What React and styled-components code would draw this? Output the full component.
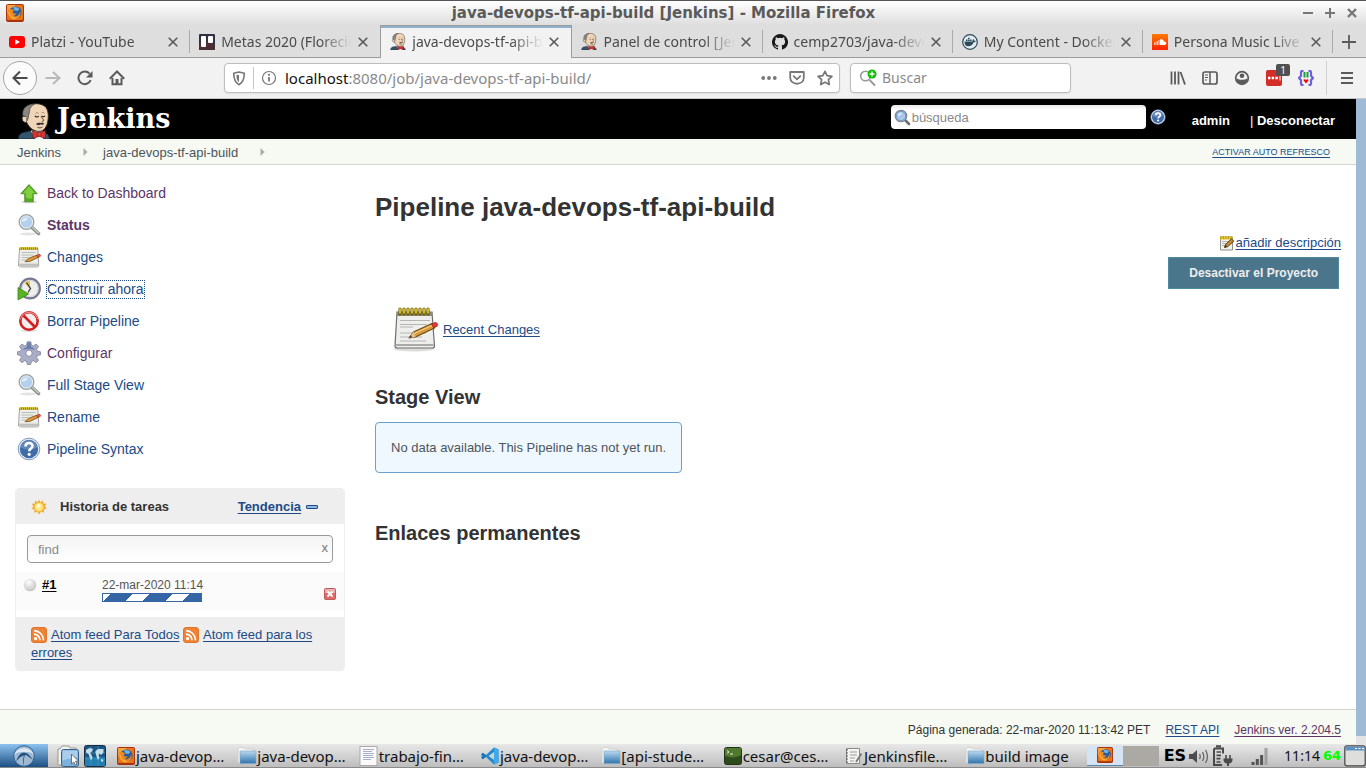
import React from "react";
import styled, { createGlobalStyle, css } from "styled-components";

const uiFont = '"Noto Sans", "Open Sans", sans-serif';
const pageFont = '"Liberation Sans", Helvetica, Arial, sans-serif';
const linkBlue = "#204a87";
const visited = "#5c3566";

const Global = createGlobalStyle`
  *, *::before, *::after { box-sizing: border-box; }
  html, body { margin: 0; padding: 0; }
  body { background: #fff; color: #333; font-family: ${pageFont}; font-size: 13px; line-height: 16px; }
  button, input { font: inherit; color: inherit; margin: 0; }
  button { padding: 0; border: 0; background: none; }
  svg { display: block; flex: none; }
`;

/* ---------- icons ---------- */

const Svg = ({ w = 16, h, vb, children, ...rest }) => (
  <svg width={w} height={h || w} viewBox={vb || `0 0 ${w} ${h || w}`} fill="none" aria-hidden="true" {...rest}>
    {children}
  </svg>
);

const FirefoxIcon = ({ size = 18 }) => (
  <Svg w={size} vb="0 0 18 18">
    <rect width="18" height="18" rx="2" fill="#a8330c" />
    <rect x="1" y="1" width="16" height="15" rx="1" fill="#e8731a" />
    <path d="M1 1h9L1 9z" fill="#f6a443" />
    <circle cx="9.400" cy="8.600" r="6.200" fill="#2a5a9a" />
    <path d="M7 3.500c2-1 5-.4 6.500 1.500l-2 2-3-.5z" fill="#6fb4e0" />
    <path d="M2.600 4.500c1 .6 1.600.4 2.600.6 1.200.2 2.600 1 3 2-1.400 0-1.600.8-1.200 1.600.8 1.200 2.600 1 3.600.3-.6 2-2 2.800-3.600 2.600 2.400 1.800 6.400.6 7.200-4.600 1.400 4.400-1.600 8.600-5.600 8.600-4.200 0-6.800-3.400-6.600-7 .1-1.600.2-3 .6-4.100z" fill="#f08a1f" />
    <path d="M3 8c.4 4 3 6.400 6.200 6.400" stroke="#ffc94d" strokeWidth="1" />
  </Svg>
);

const YoutubeIcon = () => (
  <Svg w={16} h={16}>
    <rect y="2" width="16" height="12" rx="3" fill="#f00" />
    <path d="M6.300 5.200v5.600L11 8z" fill="#fff" />
  </Svg>
);

const TrelloIcon = () => (
  <Svg>
    <rect width="16" height="16" rx="1" fill="#2f3144" />
    <path d="M0 9l8-2 8 4v5H0z" fill="#4b2d33" />
    <rect x="2" y="2" width="5" height="11" rx="1" fill="#fff" />
    <rect x="9" y="2" width="5" height="7" rx="1" fill="#fff" />
  </Svg>
);

const JenkinsHead = ({ w, h }) => (
  <Svg w={w} h={h} vb="0 0 33 38">
    <path d="M0 38c0-3 1-5 4-6.500l8-2 16 2c3 1 4.500 3.500 5 6.500z" fill="#33566c" stroke="#15242e" strokeWidth=".8" />
    <path d="M13 29l5 9h8l1-8z" fill="#e9eef0" />
    <path d="M8.500 20C6 12 7 4 13 1.800 19-.5 26 1 29.500 5c2.500 4 2.500 10 1.500 15-1 5-4 10-9 10-6 0-10.500-3.500-13.500-10z" fill="#f0d6b7" stroke="#2b2420" strokeWidth="1" />
    <path d="M5 14.500C3.500 9 6 4 10.500 2.500 12.500 1.500 15 1 17 1.200c-3 1.500-5.200 4-5.200 7l-.6 3.300c-1 1.500 0 3-1.200 5.500l-1.500 3-1-5z" fill="#8b8884" stroke="#3a3632" strokeWidth=".7" />
    <path d="M8 14.500c-2.500-1.500-4.500 0-4 2.500.4 2.500 2.500 4 4.500 3.500" fill="#f0d6b7" stroke="#2b2420" strokeWidth=".9" />
    <path d="M17.500 13.600c1 1.400 3 1.400 4 .2M24.500 13.600c1 1.300 2.600 1.200 3.500 0" stroke="#2b2420" strokeWidth="1.100" />
    <path d="M18 11c1-1 2.600-1 3.500 0M24.500 10.500c1-.8 2.500-.7 3.200.4" stroke="#8a6f5a" strokeWidth=".7" />
    <path d="M24 14c1 2.500 5 4.800.8 5.500" stroke="#4a362a" strokeWidth="1" />
    <path d="M18.500 22.500c1.500-1.800 3-2 4.800-1.300 1.700-.6 3.300-.3 4.200.8-1.500 1.200-2.800 1-4.200.8-1.500.8-3 .8-4.800-.3z" fill="#3a3230" />
    <path d="M20 25.500c2 1.200 4 1 5.500-.3" stroke="#4a362a" strokeWidth="1" />
    <path d="M15 29.500l7 2.300 6.500-2.800v8.500L22 35l-6.500 2.500z" fill="#d33833" stroke="#7c1512" strokeWidth=".8" />
    <rect x="20" y="31" width="4" height="4" rx="1" fill="#ef3d3a" stroke="#7c1512" strokeWidth=".6" />
  </Svg>
);

const GithubIcon = () => (
  <Svg>
    <path fill="#191717" d="M8 0a8 8 0 0 0-2.530 15.590c.4.070.550-.170.550-.380v-1.490c-2.230.480-2.700-.940-2.700-.940-.360-.920-.890-1.170-.890-1.170-.730-.5.060-.490.060-.490.800.060 1.230.830 1.230.830.710 1.220 1.870.870 2.330.660.070-.520.280-.870.500-1.070-1.770-.2-3.640-.890-3.640-3.950 0-.870.310-1.590.820-2.150-.080-.2-.360-1.010.080-2.120 0 0 .670-.210 2.200.820a7.600 7.600 0 0 1 4 0c1.530-1.030 2.200-.820 2.200-.820.440 1.110.160 1.920.080 2.120.510.560.820 1.280.820 2.150 0 3.070-1.870 3.750-3.650 3.950.290.250.540.730.540 1.480v2.190c0 .210.150.460.550.380A8 8 0 0 0 8 0z" />
  </Svg>
);

const DockerIcon = () => (
  <Svg>
    <circle cx="8" cy="8" r="7.300" fill="#e4eef2" stroke="#2c4a5c" strokeWidth="1.200" />
    <path d="M2.500 7.500h8c.3-1 0-1.800.8-2.500.9.600 1 1.200 1 1.700.6 0 1 .1 1.500.4-.4 1-1.200 1.300-2.200 1.200-.8 2.700-2.800 4-5.400 4-2.300 0-3.700-1.500-3.700-4.800z" fill="#2c4a5c" />
    <path d="M4 5.500h1.600V7H4zM6 5.500h1.600V7H6zM8 5.500h1.600V7H8zM6 3.700h1.600v1.400H6z" fill="#2c4a5c" />
  </Svg>
);

const SoundcloudIcon = () => (
  <Svg>
    <defs>
      <linearGradient id="sc" x1="0" y1="0" x2="0" y2="1">
        <stop stopColor="#ff7a00" />
        <stop offset="1" stopColor="#ff2200" />
      </linearGradient>
    </defs>
    <rect width="16" height="16" fill="url(#sc)" />
    <path d="M2.500 8.500v2.300M4 7.500V11M5.500 7v4M7 6v5" stroke="#fff" strokeWidth=".8" />
    <path d="M8 11V5.500c2-.9 3.800.2 4 2.100 1.200-.3 2.200.5 2.200 1.700S13.400 11 12.500 11z" fill="#fff" />
  </Svg>
);

const CloseX = () => (
  <Svg w={10}>
    <path d="M.7.700l8.600 8.600M9.300.700L.7 9.300" stroke="#5a5a5a" strokeWidth="1.600" />
  </Svg>
);

const BackIcon = () => (
  <Svg><path d="M15.500 8H1.500M8 1.500L1.500 8 8 14.500" stroke="#4a4a4a" strokeWidth="2" /></Svg>
);
const ForwardIcon = () => (
  <Svg><path d="M.5 8h14M8 2l6.500 6L8 14" stroke="#b8b8b8" strokeWidth="2" /></Svg>
);
const ReloadIcon = () => (
  <Svg>
    <path d="M13.600 10.200A6.300 6.300 0 1 1 12.500 3.700" stroke="#5a5a5a" strokeWidth="2" />
    <path d="M15.500 1v6.500H9z" fill="#5a5a5a" />
  </Svg>
);
const HomeIcon = () => (
  <Svg>
    <path d="M.8 8.700L8 1.500l7.200 7.200" stroke="#5a5a5a" strokeWidth="2" />
    <path d="M3.500 8v6.200h9V8" stroke="#5a5a5a" strokeWidth="2" />
    <path d="M6.500 15V9h3v6z" fill="#5a5a5a" />
  </Svg>
);
const ShieldIcon = () => (
  <Svg w={14} h={15}>
    <path d="M7 1l5.300 1.300c0 5-.8 9-5.300 11.500C2.500 11.300 1.700 7.300 1.700 2.300z" stroke="#777" strokeWidth="1.600" strokeLinejoin="round" />
    <path d="M7 3.700l-2.600.6c.1 3.200.6 5.500 2.600 7z" fill="#777" />
  </Svg>
);
const InfoIcon = () => (
  <Svg>
    <circle cx="8" cy="8" r="6.500" stroke="#777" strokeWidth="1.200" />
    <path d="M8 7v4.500" stroke="#777" strokeWidth="1.800" />
    <circle cx="8" cy="4.800" r="1.100" fill="#777" />
  </Svg>
);
const DotsIcon = () => (
  <Svg>
    <circle cx="2.200" cy="8" r="1.900" fill="#777" /><circle cx="8" cy="8" r="1.900" fill="#777" /><circle cx="13.800" cy="8" r="1.900" fill="#777" />
  </Svg>
);
const PocketIcon = () => (
  <Svg>
    <path d="M1.200 2h13.600v5.500c0 8.300-13.600 8.300-13.600 0z" stroke="#777" strokeWidth="1.800" strokeLinejoin="round" />
    <path d="M4.700 6.200L8 9.300l3.300-3.100" stroke="#777" strokeWidth="1.800" strokeLinecap="round" />
  </Svg>
);
const StarIcon = () => (
  <Svg>
    <path d="M8 1.300l2.100 4.400 4.800.6-3.500 3.400.9 4.800L8 12.200l-4.300 2.300.9-4.800L1.100 6.300l4.800-.6z" stroke="#777" strokeWidth="1.700" strokeLinejoin="round" />
  </Svg>
);
const SearchAddIcon = () => (
  <Svg w={18} vb="0 0 18 18">
    <circle cx="6.500" cy="7" r="4.800" stroke="#999" strokeWidth="1.600" />
    <path d="M10.500 11l5.500 5.500" stroke="#999" strokeWidth="2" />
    <circle cx="13" cy="5" r="4.500" fill="#12bc00" />
    <path d="M13 2.500v5M10.500 5h5" stroke="#fff" strokeWidth="1.400" />
  </Svg>
);
const LibraryIcon = () => (
  <Svg>
    <path d="M1.500 1.500v13M5 1.500v13M8.500 1.500v13M10.500 2l4.500 12.500" stroke="#5a5a5a" strokeWidth="1.800" />
  </Svg>
);
const SidebarIcon = () => (
  <Svg>
    <rect x="1" y="2" width="14" height="12" rx="2" stroke="#5a5a5a" strokeWidth="1.700" />
    <path d="M8 2v12" stroke="#5a5a5a" strokeWidth="1.500" />
    <path d="M3 5h3M3 7.500h3M3 10h2" stroke="#5a5a5a" />
  </Svg>
);
const AccountIcon = () => (
  <Svg>
    <circle cx="8" cy="8" r="6.300" stroke="#5a5a5a" strokeWidth="1.700" />
    <circle cx="8" cy="5.700" r="2.300" fill="#5a5a5a" />
    <path d="M2.500 8.500c3 1.800 8 1.800 11 0-.3 3.500-2.500 5.500-5.500 5.500s-5.200-2-5.500-5.500z" fill="#5a5a5a" />
  </Svg>
);
const BracesIcon = () => (
  <Svg>
    <path d="M5.500 1H4.300C3.300 1 3 1.600 3 2.600v3.200L1 8l2 2.200v3.200c0 1 .3 1.600 1.300 1.600h1.200M10.500 1h1.200c1 0 1.300.6 1.300 1.600v3.200L15 8l-2 2.200v3.200c0 1-.3 1.600-1.300 1.600h-1.200" stroke="#6a5fe0" strokeWidth="2.200" />
    <path d="M6.500 2v5.500M9.500 2v5.500" stroke="#1f9a3d" strokeWidth="2" />
    <path d="M5.300 10c.9-1 1.800-.9 2.700 0 .9-.9 1.800-1 2.700 0L8 13.500z" fill="#f00" />
  </Svg>
);
const MenuIcon = () => (
  <Svg><path d="M2 3h12M2 8h12M2 13h12" stroke="#5a5a5a" strokeWidth="2" /></Svg>
);

const Magnifier = ({ size = 24 }) => (
  <Svg w={size} vb="0 0 24 24">
    <ellipse cx="11" cy="21" rx="8" ry="1.500" fill="#e3e3e3" />
    <path d="M15 14.500l6.500 6" stroke="#8c8e8a" strokeWidth="3.600" strokeLinecap="round" />
    <path d="M15.500 14.500l6 5.500" stroke="#c5c7c2" strokeWidth="1.600" strokeLinecap="round" />
    <circle cx="9.500" cy="9" r="7.300" fill="#b5d0ee" stroke="#a3a6a1" strokeWidth="1.400" />
    <circle cx="9.500" cy="9" r="6.100" stroke="#e9edf0" strokeWidth="1" />
    <path d="M5 8.500c.5-3 3-4.500 6-4-1 3-3 4.500-6 4z" fill="#e1eefb" />
  </Svg>
);

const SearchGlass = () => (
  <Svg w={17} vb="0 0 17 17">
    <path d="M11.500 11.500l3.500 3.500" stroke="#6d706b" strokeWidth="2.600" strokeLinecap="round" />
    <circle cx="7" cy="7" r="5.800" fill="#a9c8ee" stroke="#7f827d" strokeWidth="1.100" />
    <circle cx="7" cy="7" r="4.700" stroke="#5f8cc6" strokeWidth=".9" />
    <path d="M4 6.500c.5-2 2-3 4-2.500-.8 2-2 3-4 2.500z" fill="#e1eefb" />
  </Svg>
);

const UpArrow = () => (
  <Svg w={24}>
    <ellipse cx="12" cy="21" rx="8" ry="1.500" fill="#d9d9d9" />
    <path d="M12 3.500l8.300 9.300h-4v8H7.700v-8h-4z" fill="#55ad20" stroke="#3a7d14" strokeWidth=".7" strokeLinejoin="round" />
    <path d="M12 5.200l5.800 6.700h-2.500v5c-2 1-4.500 1-6.500-1v-4H6z" fill="#7fcf3f" />
  </Svg>
);

const Notepad = ({ size = 48 }) => (
  <Svg w={size} vb="0 0 48 48">
    <ellipse cx="23" cy="44" rx="20" ry="2.500" fill="#ddd" />
    <path d="M6 7h35l2.500 34c0 1.500-.5 2-2 2h-35C5 43 4 42.500 4 41z" fill="#eeeeec" stroke="#6e706b" strokeWidth="1.200" />
    <path d="M6 7h35l.3 4H5.600z" fill="#8d8b80" />
    <path d="M5 40h37.500" stroke="#aaa" strokeWidth="2" />
    <path d="M9 15.500h30M9 19.500h27M9 22h13M9 28h26M9 32h22M9 36h26" stroke="#b4b6b2" strokeWidth="1.100" />
    <path d="M9 9V4M13 9V4M17 9V4M21 9V4M25 9V4M29 9V4M33 9V4M37 9V4" stroke="#6f5e00" strokeWidth="3.200" strokeLinecap="round" />
    <path d="M9 8V4M13 8V4M17 8V4M21 8V4M25 8V4M29 8V4M33 8V4M37 8V4" stroke="#f0d83a" strokeWidth="1.500" strokeLinecap="round" />
    <path d="M18 33l4.500-6L41 18.500l2.500 4.500-19 9z" fill="#d99a3a" stroke="#6e4a12" strokeWidth="1.100" strokeLinejoin="round" />
    <path d="M23 28.500l18-8" stroke="#f3cf85" strokeWidth="1.300" />
    <path d="M18 33l4.500-6 2 5z" fill="#e8c58e" />
    <path d="M18 33l2-2.700 1 1.900z" fill="#2e2a25" />
    <path d="M40.500 19l3.500-1.500c2-.5 3.700 2.500 2 3.800L42.700 23z" fill="#e23a36" stroke="#9a1d1a" strokeWidth=".7" />
  </Svg>
);

const NotepadSmall = () => (
  <Svg w={24}>
    <ellipse cx="12" cy="22" rx="10" ry="1.300" fill="#ddd" />
    <path d="M2.500 3.500h18.300l1 17.500H1.500z" fill="#eeeeec" stroke="#a3a5a0" strokeWidth="1" />
    <path d="M2.500 19.300h19" stroke="#b9bbb6" strokeWidth="1.300" />
    <path d="M4.500 7.500h14M4.500 10h12M4.500 12.500h7M4.500 15h5" stroke="#b9bbb6" strokeWidth="1" />
    <path d="M2.500 2.300h18.300v2.400H2.500z" fill="#8a7a1c" />
    <path d="M3.500 2v2.500M5.500 2v2.500M7.500 2v2.500M9.500 2v2.500M11.500 2v2.500M13.500 2v2.500M15.500 2v2.500M17.500 2v2.500M19.500 2v2.500" stroke="#dcc83c" strokeWidth="1" />
    <path d="M8 16.700l3.200-3.200 9-3.500 1.300 2.200-8.800 4.300z" fill="#dd9a3c" stroke="#6e4a12" strokeWidth=".8" strokeLinejoin="round" />
    <path d="M19.500 10.300l2.700-1c1.200-.2 2 1.400 1 2.200l-2.500 1.200z" fill="#e2533a" stroke="#a03018" strokeWidth=".5" />
  </Svg>
);

const NoteEdit = () => (
  <Svg>
    <path d="M1.500 2h12v13h-12z" fill="#f1f1ef" stroke="#8d8f8a" />
    <path d="M3 6.500h7M3 8.500h5M3 10.500h4" stroke="#b4b6b2" />
    <path d="M1 1.500h12.500v3H1z" fill="#e5c62c" />
    <path d="M2 1v3M4.500 1v3M7 1v3M9.500 1v3M12 1v3" stroke="#a98c10" strokeWidth=".7" />
    <path d="M5.500 12.500l1-3L12.500 3.800l2.300 2.400-6.300 5.600z" fill="#c58a35" stroke="#4d3510" strokeWidth=".9" strokeLinejoin="round" />
    <path d="M5.500 12.500l1-2.500 1.500 1.600z" fill="#222" />
  </Svg>
);

const ClockBuild = () => (
  <Svg w={24}>
    <circle cx="13" cy="11.500" r="9.800" fill="#eeeeec" stroke="#77778f" strokeWidth="2.200" />
    <circle cx="13" cy="11.500" r="8" stroke="#cfcfda" strokeWidth=".8" />
    <path d="M13 11.500L7.500 6.500C9 4.500 11 3.800 13 3.800z" fill="#e6c84f" />
    <path d="M9.500 5.500l4 6-2.500 4" stroke="#333" strokeWidth="1.200" />
    <path d="M1 10.500V23l10.500-6z" fill="#57b520" stroke="#3b8012" strokeWidth=".8" />
  </Svg>
);

const Forbidden = () => (
  <Svg w={24}>
    <ellipse cx="12" cy="21.500" rx="8" ry="1.500" fill="#ddd" />
    <circle cx="12" cy="12" r="8.700" fill="#f3eeee" stroke="#d42020" strokeWidth="2.600" />
    <path d="M6 6l12 12" stroke="#d42020" strokeWidth="2.700" />
    <path d="M3.300 10.500A8.800 8.800 0 0 1 20.500 10" stroke="#ec8585" strokeWidth="1.300" />
  </Svg>
);

const Gear = () => (
  <Svg w={24}>
    <path d="M10.200.8h3.600l.6 3.400 1.900.8 2.800-2 2.500 2.500-2 2.800.8 1.900 3.100.6v3l-3.100.7-.8 1.900 2 2.800-2.500 2.500-2.800-2-1.900.8-.7 3h-3.400l-.7-3-1.900-.8-2.800 2-2.500-2.500 2-2.800-.8-1.900-3.100-.7v-3l3.100-.6.8-1.900-2-2.800L4.900 3l2.800 2 1.900-.8z" fill="#a9adc6" stroke="#7d829f" strokeWidth=".8" strokeLinejoin="round" />
    <path d="M10.500 1.500h3l.7 4.500c2 .5 3 1.500 3.800 3-4-1.500-8-1.500-12 0 .8-1.500 2-2.500 3.800-3z" fill="#6a80a8" />
    <circle cx="12" cy="12.200" r="3.200" fill="#fff" stroke="#8288a8" />
  </Svg>
);

const HelpIcon = ({ size = 24 }) => (
  <Svg w={size} vb="0 0 24 24">
    <circle cx="12" cy="12" r="10.800" fill="#e9eef5" stroke="#7d9ac0" strokeWidth="1" />
    <circle cx="12" cy="12" r="9.200" fill="#3f6ca8" />
    <path d="M3.500 10.500a8.600 8.600 0 0 1 17 0c-5 2.500-12 2.500-17 0z" fill="#6388bb" />
    <path d="M8.500 9.500c0-4.500 7-4.500 7-.5 0 2.500-3.300 2.500-3.300 5.300" stroke="#fff" strokeWidth="2.600" />
    <circle cx="12.200" cy="17.300" r="1.600" fill="#fff" />
  </Svg>
);

const SunIcon = () => (
  <Svg>
    <path d="M8 .5l1.400 2.700L12 1.600l.3 3 3.200.2-1.700 2.600 2 2.300-3 .8.200 3.200-2.800-1.300L8 15.500l-1.900-3-2.900 1.300.2-3.200-3-.8 2-2.300L.8 4.800 3.900 4.600 4.200 1.600l2.500 1.600z" fill="#f3a93a" />
    <circle cx="8" cy="8" r="4.600" fill="#fde37a" stroke="#f1b63a" strokeWidth=".6" />
    <circle cx="7.500" cy="7" r="2.300" fill="#fff6c8" />
  </Svg>
);

const BallIcon = () => (
  <Svg w={14}>
    <defs>
      <radialGradient id="ball" cx=".4" cy=".3" r=".8">
        <stop stopColor="#fdfdfd" />
        <stop offset="1" stopColor="#bcbcbc" />
      </radialGradient>
    </defs>
    <circle cx="7" cy="7" r="6.300" fill="url(#ball)" />
  </Svg>
);

const StopIcon = () => (
  <Svg w={12}>
    <rect x=".5" y=".5" width="11" height="11" rx="1" fill="#de6a6a" stroke="#bd5c5c" />
    <rect x="1" y="1" width="10" height="4" fill="#eab0b0" />
    <path d="M3.500 3.500l5 5M8.500 3.500l-5 5" stroke="#fff" strokeWidth="1.800" />
  </Svg>
);

const RssIcon = () => (
  <Svg>
    <rect x=".5" y=".5" width="15" height="15" rx="2.500" fill="#ee8336" stroke="#e0752a" />
    <circle cx="4.600" cy="11.600" r="1.700" fill="#fff" />
    <path d="M3 7.200a6 6 0 0 1 6 6M3 3.700a9.500 9.500 0 0 1 9.500 9.500" stroke="#fff" strokeWidth="1.700" />
  </Svg>
);

const CrumbArrow = () => (
  <Svg w={5} h={8}><path d="M.5 0l4 4-4 4z" fill="#aaa" /></Svg>
);

const LubuntuIcon = () => (
  <Svg w={22}>
    <circle cx="11" cy="11" r="10.300" fill="#9fb9d3" stroke="#2d5f8f" />
    <path d="M1 10C4 1 18 1 21 10c-3-3-6-3.500-9-2.500C7 6 4 7.500 1 10z" fill="#dbe7f2" />
    <path d="M3 17c2-6 4-9 8-9.500 3 0 6 3 9 7.500-4-3-6-5-8-5-1 2-1.500 6-1 11-1.500-4-1-7 0-10.500-4 1-5.500 3-8 6.500z" fill="#24527e" />
  </Svg>
);

const FilesIcon = () => (
  <Svg w={22}>
    <path d="M3 4l2-3h7l1 2h6v17H1V4z" fill="#f2f2f0" stroke="#9a9a98" />
    <rect x="4.500" y="4.500" width="17" height="17" rx="2" fill="#7db0da" stroke="#33618f" />
    <path d="M5.500 5.500h15v7c-5 1-10 1-15 3z" fill="#aacdea" />
    <path d="M14.500 9v10l2.300-2 1.400 3 1.800-.8-1.400-3h3z" fill="#fff" stroke="#555" strokeWidth=".8" />
  </Svg>
);

const GlobeIcon = () => (
  <Svg w={22}>
    <rect x=".5" y=".5" width="21" height="21" rx="2" fill="#1d5680" stroke="#0f3048" />
    <path d="M1 12h20v9H1z" fill="#2a9bd0" opacity=".6" />
    <path d="M7 1v20M14 1v20M1 8h20M1 14h20" stroke="#4f96c0" strokeWidth=".6" />
    <path d="M2 5l3.500-2 3.500 1-1 2.500-2 1.500 1.500 2 1 2.500-1.500 3-1.500-3.500-1-3-2.500-1.500zM11.500 6l2.500-2h5.500v3.500L17 10l-1.500-1.500-1 1.500 1 2.500-1.500 2.500-1.500-3.500-1-3.500zM17 14l2.500.8-.8 2.200-1.700-.8z" fill="#c3dde9" />
  </Svg>
);

const FolderIcon = () => (
  <Svg w={20}>
    <defs>
      <linearGradient id="fold" x1="0" y1="0" x2="0" y2="1">
        <stop stopColor="#b9d8f0" />
        <stop offset="1" stopColor="#2f74ab" />
      </linearGradient>
    </defs>
    <path d="M1 3.500l1-2h5l1 1.500h8v14H1z" fill="#f3f3f1" stroke="#c8c8c6" strokeWidth=".7" />
    <path d="M3 5h16v12.500H3z" fill="url(#fold)" stroke="#7aa7cc" strokeWidth=".6" />
  </Svg>
);

const DocIcon = () => (
  <Svg w={20}>
    <rect x="1" y=".5" width="17" height="19" fill="#fafafa" stroke="#aaa" />
    <path d="M4 3.500h11M4 5.500h9M4 7.500h11M4 9.500h10M4 11.500h11M4 13.500h8" stroke="#9aa7c4" strokeWidth=".9" />
  </Svg>
);

const VscodeIcon = () => (
  <Svg w={18} vb="0 0 18 18">
    <path d="M13 .5L4.500 8.400 1.700 6.200.5 6.900v4.200l1.200.7 2.800-2.200 8.500 7.900 4.500-2V2.500zM13 5v8L7.600 9z" fill="#2489ca" fillRule="evenodd" />
    <path d="M13 .5l4.500 2v13l-4.500 2z" fill="#3fa9ee" />
    <path d="M1 6.500l3.500 2.300M1 11.500l3.500-2.300" stroke="#1070b3" strokeWidth="2" />
  </Svg>
);

const TerminalIcon = () => (
  <Svg w={18} vb="0 0 18 18">
    <rect x=".5" y=".5" width="17" height="17" rx="2" fill="#2d4a1c" stroke="#23331a" />
    <path d="M1 1h16v7C12 11 6 11 1 9z" fill="#4f7a2d" />
    <path d="M3 3.500l2 1.500-2 1.500M6 7h3" stroke="#eef5e6" strokeWidth="1" />
  </Svg>
);

const EditorIcon = () => (
  <Svg w={18} vb="0 0 18 18">
    <path d="M1.500 1.500h13v15h-13z" fill="#f4f4f2" stroke="#8b8b89" />
    <path d="M1 3h2M1 6h2M1 9h2M1 12h2M1 15h2" stroke="#555" />
    <path d="M5 5h7M5 8h7M5 11h5M5 14h4" stroke="#9a9a98" />
    <path d="M16.500 6.500L11 15" stroke="#777" strokeWidth="1.800" />
  </Svg>
);

const VolumeIcon = () => (
  <Svg w={20}>
    <path d="M0 8h3.500L8 4v13l-4.500-4H0z" fill="#4d4d4d" />
    <path d="M10.500 8q1.500 2.500 0 5M13.500 6q2.600 4.500 0 9M16.500 4q4 6.500 0 13" stroke="#666" strokeWidth="1.300" />
  </Svg>
);

const BatteryIcon = () => (
  <Svg w={22}>
    <path d="M4 1.200h5M2 3.500h9v5M2 3.500V20h8" stroke="#4a4a4a" strokeWidth="2" />
    <path d="M4.500 7h4.500M4.500 10.300h4.500M4.500 13.600h4M4.500 17h4" stroke="#4a4a4a" strokeWidth="1.700" />
    <path d="M14 10v4M18 10v4" stroke="#4a4a4a" strokeWidth="1.600" />
    <path d="M11.500 13.500h9v1.500c0 2.500-2.200 3.500-4.500 3.500s-4.500-1-4.500-3.500z" fill="#4a4a4a" />
    <path d="M16 18v3" stroke="#4a4a4a" strokeWidth="2" />
  </Svg>
);

const SignalIcon = () => (
  <Svg w={18} h={20}>
    <path d="M2 16v3M6.300 13v6M10.600 9v10" stroke="#555" strokeWidth="3" />
    <path d="M15 2v17" stroke="#a0a0a0" strokeWidth="3" />
  </Svg>
);

const DesktopIcon = () => (
  <Svg w={22}>
    <rect x=".8" y=".8" width="20.400" height="20" rx="2" fill="#dededc" stroke="#444" strokeWidth="1.200" />
    <path d="M1.500 1.500h19v4h-19z" fill="#5f93c4" />
    <path d="M11 3.500h2M14.500 3.500h2M18 3.500h2" stroke="#fff" strokeWidth="1.200" />
  </Svg>
);

/* ---------- browser chrome ---------- */

const Screen = styled.div`
  display: flex;
  flex-direction: column;
  min-height: 100vh;
`;

const TitleBar = styled.header`
  display: flex;
  align-items: center;
  height: 25px;
  padding: 0 9px 0 6px;
  border-top: 1px solid #555;
  background: linear-gradient(#fff, #dedede);
`;

const WindowTitle = styled.div`
  flex: 1;
  text-align: center;
  color: #5a5a5a;
  font: bold 15px/20px "DejaVu Sans", sans-serif;
  white-space: nowrap;
`;

const WindowButtons = styled.div`
  display: flex;
  gap: 12px;
`;

const IconButton = styled.button`
  display: flex;
  flex: none;
  align-items: center;
  justify-content: center;
`;

const TabStrip = styled.nav`
  display: flex;
  height: 33px;
  background: #dedede;
  box-shadow: inset 0 -1px #9c9c9c;
`;

const Tab = styled.div`
  position: relative;
  display: flex;
  flex: 1;
  min-width: 0;
  align-items: center;
  gap: 6px;
  padding: 0 12px 0 9px;
  color: #4a4a4a;
  font: 14px/20px ${uiFont};
  ${(p) =>
    p.$active
      ? css`
          background: #f2f2f2;
          border: solid #9c9c9c;
          border-width: 0 1px;
          box-shadow: inset 0 1px #9c9c9c, inset 0 3px #91b1cf;
        `
      : css`
          &::after {
            content: "";
            position: absolute;
            right: 0;
            top: 5px;
            bottom: 5px;
            width: ${p.$divider ? "1px" : "0"};
            background: #aaa;
          }
        `}
`;

const TabLabel = styled.span`
  flex: 1;
  overflow: hidden;
  white-space: nowrap;
  mask-image: linear-gradient(to right, #000 calc(100% - 32px), transparent);
`;

const NewTab = styled(IconButton)`
  width: 33px;
`;

const NavBar = styled.div`
  display: flex;
  align-items: center;
  height: 41px;
  padding: 0 11px 0 3px;
  background: #f2f2f2;
  border-bottom: 1px solid #c8c8c8;
`;

const BackButton = styled(IconButton)`
  width: 34px;
  height: 34px;
  border: 1px solid #a6a6a6;
  border-radius: 50%;
  background: #fbfbfb;
`;

const NavButtons = styled.div`
  display: flex;
  align-items: center;
  gap: 16px;
  margin: 0 99px 0 8px;
`;

const Field = styled.label`
  display: flex;
  align-items: center;
  height: 30px;
  border: 1px solid #bdbdbd;
  border-radius: 4px;
  background: #fff;
  box-shadow: 0 1px 2px rgba(0, 0, 0, 0.08);
  font: 14px/20px ${uiFont};
`;

const UrlField = styled(Field)`
  flex: 1;
  gap: 12px;
  padding: 0 6px 0 7px;
  color: #8a8a8a;
`;

const UrlDivider = styled.span`
  width: 1px;
  height: 22px;
  background: #c4c4c4;
  margin: 0 -5px;
`;

const UrlText = styled.span`
  flex: 1;
  margin-left: -4px;
  font-size: 15px;
  b { color: #111; font-weight: normal; }
`;

const SearchField = styled(Field)`
  width: 221px;
  margin-left: 10px;
  padding: 0 8px;
  gap: 5px;
`;

const BareInput = styled.input`
  flex: 1;
  min-width: 0;
  border: 0;
  outline: 0;
  padding: 0;
  background: transparent;
  &::placeholder { color: #8a8a8a; opacity: 1; }
`;

const Extensions = styled.div`
  display: flex;
  align-items: center;
  gap: 16px;
  margin-left: 99px;
`;

const PassButton = styled(IconButton)`
  position: relative;
  width: 16px;
  height: 16px;
  border-radius: 2px;
  background: #d32d27;
  span {
    position: absolute;
    left: 10px;
    top: -6px;
    width: 14px;
    height: 12px;
    border-radius: 2px;
    background: #505050;
    color: #fff;
    font: 10px/12px ${uiFont};
    text-align: center;
  }
`;

const MenuButton = styled(IconButton)`
  height: 34px;
  padding-left: 12px;
  margin-left: -4px;
  border-left: 1px solid #d0d0d0;
`;

/* ---------- page ---------- */

const Viewport = styled.div`
  display: flex;
  flex: 1;
`;

const Page = styled.div`
  display: flex;
  flex: 1;
  flex-direction: column;
  min-width: 0;
`;

const Scrollbar = styled.div`
  width: 10px;
  padding-bottom: 8px;
  background: #e4e4e4;
  &::before {
    content: "";
    display: block;
    height: 100%;
    background: #9fbad4;
  }
`;

const PageHeader = styled.header`
  display: flex;
  align-items: flex-start;
  height: 40px;
  padding: 0 21px 0 18px;
  overflow: hidden;
  background: #000;
  color: #fff;
`;

const Brand = styled.a`
  display: flex;
  flex: 1;
  gap: 7px;
  padding-top: 4px;
  color: #fff;
  font: bold 27px/32px "DejaVu Serif", serif;
  text-decoration: none;
`;

const SiteSearch = styled.form`
  display: flex;
  align-items: center;
  gap: 4px;
  padding-top: 6px;
`;

const SiteSearchBox = styled.label`
  display: flex;
  align-items: center;
  gap: 1px;
  width: 255px;
  height: 24px;
  padding: 0 3px;
  border-radius: 4px;
  background: linear-gradient(#e8e8e8, #fff 5px);
  color: #333;
  input { padding-top: 2px; }
`;

const Account = styled.div`
  display: flex;
  gap: 20px;
  margin-left: 26px;
  padding-top: 14px;
  font-weight: bold;
  a { color: #fff; text-decoration: none; }
  i { font-style: normal; font-weight: normal; }
`;

const Breadcrumbs = styled.nav`
  display: flex;
  align-items: center;
  height: 26px;
  padding: 0 26px 0 17px;
  background: #f6faf2;
  border-bottom: 1px solid #d3d7cf;
  svg { margin-right: 15px; }
`;

const Crumb = styled.a`
  margin-right: 22px;
  padding-top: 2px;
  color: #4d545d;
  text-decoration: none;
`;

const Link = styled.a`
  color: ${(p) => (p.$visited ? visited : linkBlue)};
  text-decoration: underline 1px;
  text-underline-offset: 2px;
  text-decoration-skip-ink: none;
`;

const RefreshSlot = styled.div`
  flex: 1;
  text-align: right;
  font-size: 9px;
  line-height: 12px;
`;

const Body = styled.div`
  display: flex;
  flex: 1;
  padding: 0 15px;
`;

const Side = styled.aside`
  flex: none;
  width: 330px;
  padding: 12px 0 36px;
`;

const TaskList = styled.ul`
  margin: 0 0 23px;
  padding: 0;
  list-style: none;
  font-size: 14px;
`;

const Task = styled.li`
  display: flex;
  align-items: center;
  gap: 6px;
  height: 32px;
  padding-left: 2px;
`;

const TaskLink = styled.a`
  padding: 0 0 1px;
  color: ${(p) => (p.$visited ? visited : linkBlue)};
  font-weight: ${(p) => (p.$current ? "bold" : "normal")};
  text-decoration: none;
  outline: ${(p) => (p.$focused ? `1px dotted ${linkBlue}` : "0")};
`;

const Card = styled.section`
  border: 1px solid #eee;
  border-radius: 4px;
  overflow: hidden;
`;

const CardHead = styled.div`
  display: flex;
  align-items: center;
  height: 35px;
  padding: 0 26px 0 15px;
  background: #eee;
  font-weight: bold;
  h2 { flex: 1; margin: 0 0 0 13px; font-size: 13px; line-height: 16px; }
`;

const Collapse = styled(IconButton)`
  width: 12px;
  height: 4px;
  margin-left: 5px;
  border: 1px solid ${linkBlue};
  border-radius: 1px;
  background: #8fb6e0;
`;

const FindBox = styled.label`
  display: flex;
  height: 28px;
  margin: 11px 11px 9px;
  padding: 0 4px 0 10px;
  border: 1px solid #999;
  border-radius: 4px;
  background: linear-gradient(#f4f4f4, #fff);
  input { padding-top: 2px; }
  span { color: #777; line-height: 24px; }
`;

const Builds = styled.table`
  width: 100%;
  height: 38px;
  border-collapse: collapse;
  background: #fbfbfb;
  td { padding: 5px 0 0; vertical-align: top; }
`;

const BuildName = styled.div`
  display: flex;
  align-items: center;
  gap: 5px;
  padding-left: 7px;
  a { color: #000; font-weight: bold; }
`;

const BuildDate = styled.div`
  color: #555;
  font-size: 12px;
`;

const Progress = styled.div`
  width: 100px;
  height: 9px;
  border: 1px solid #3465a4;
  background: repeating-linear-gradient(135deg, #fff 0 5px, #3465a4 5px 21px, #fff 21px 28px);
`;

const Cancel = styled(IconButton)`
  margin: 11px 8px 0 auto;
`;

const CardFoot = styled.div`
  margin-top: 7px;
  padding: 9px 15px 8px;
  background: #eee;
  line-height: 18px;
  svg { display: inline-block; margin-right: 4px; vertical-align: -4px; }
`;

const Main = styled.main`
  flex: 1;
  min-width: 0;
  padding: 26px 0 38px 30px;
  h1 { margin: 0 0 12px; font-size: 26px; line-height: 32px; }
  h2 { margin: 0; font-size: 20px; line-height: 24px; }
`;

const Actions = styled.div`
  display: flex;
  flex-direction: column;
  align-items: flex-end;
  gap: 6px;
`;

const WithIcon = styled.div`
  display: flex;
  align-items: center;
`;

const PrimaryButton = styled.button`
  height: 32px;
  margin-right: 2px;
  padding: 0 20px;
  border: 1px solid #4c8aa0;
  background: #4b758b;
  color: #eee;
  font-size: 12px;
  font-weight: bold;
`;

const Recent = styled(WithIcon)`
  gap: 4px;
  margin: 16px 0 32px 16px;
  a { padding-top: 2px; }
`;

const Notice = styled.p`
  width: fit-content;
  margin: 13px 0 48px;
  padding: 17px 15px 16px;
  border: 1px solid #6a9fd0;
  border-radius: 4px;
  background: #f0f8ff;
  color: #4d545d;
`;

const PageFooter = styled.footer`
  display: flex;
  justify-content: flex-end;
  gap: 15px;
  padding: 12px 15px 6px;
  border-top: 1px solid #d3d7cf;
  background: #f6faf2;
  font-size: 12px;
`;

/* ---------- desktop panel ---------- */

const Panel = styled.footer`
  display: flex;
  align-items: center;
  height: 24px;
  border-bottom: 1px solid #8a8a8a;
  background: linear-gradient(#e8e8e8, #bdbdbd);
  color: #111;
  font: 14px/20px ${uiFont};
`;

const StartButton = styled(IconButton)`
  width: 48px;
  height: 23px;
  background: linear-gradient(#8fc3ef, #1b4f83);
`;

const Launchers = styled.div`
  display: flex;
  gap: 5px;
  padding: 0 10px 0 9px;
`;

const Windows = styled.div`
  display: flex;
  flex: 1;
  min-width: 0;
  font-size: 15px;
`;

const WindowItem = styled.button`
  display: flex;
  flex: 1;
  align-items: center;
  min-width: 0;
  white-space: nowrap;
`;

const WindowIcon = styled.span`
  display: flex;
  flex: none;
  justify-content: center;
  width: 20px;
`;

const Pager = styled.div`
  display: flex;
  margin-right: 5px;
`;

const Desk = styled(IconButton)`
  width: 36px;
  height: 20px;
  background: ${(p) => (p.$current ? "#d5e4f2" : "#aca8a3")};
  border-bottom: 1px solid ${(p) => (p.$current ? "#5b84ac" : "#aca8a3")};
`;

const Tray = styled.div`
  display: flex;
  align-items: center;
  gap: 3px;
`;

const Layout = styled.span`
  color: #000;
  font: bold 16px/20px "DejaVu Sans", sans-serif;
`;

const Signal = styled.span`
  margin: 0 12px 0 14px;
`;

const Cpu = styled.span`
  color: #0f0;
  font: bold 13px/20px "DejaVu Sans", sans-serif;
`;

const TABS = [
  { label: "Platzi - YouTube", Icon: YoutubeIcon, divider: true },
  { label: "Metas 2020 (Floreciendo)", Icon: TrelloIcon },
  { label: "java-devops-tf-api-build", Icon: () => <JenkinsHead w={16} h={17} />, active: true },
  { label: "Panel de control [Jenkins]", Icon: () => <JenkinsHead w={16} h={17} />, divider: true },
  { label: "cemp2703/java-devops", Icon: GithubIcon, divider: true },
  { label: "My Content - Docker", Icon: DockerIcon, divider: true },
  { label: "Persona Music Live", Icon: SoundcloudIcon, divider: true },
];

const TASKS = [
  { label: "Back to Dashboard", Icon: UpArrow, visited: true },
  { label: "Status", Icon: Magnifier, visited: true, current: true },
  { label: "Changes", Icon: NotepadSmall },
  { label: "Construir ahora", Icon: ClockBuild, focused: true },
  { label: "Borrar Pipeline", Icon: Forbidden },
  { label: "Configurar", Icon: Gear, visited: true },
  { label: "Full Stage View", Icon: Magnifier },
  { label: "Rename", Icon: NotepadSmall },
  { label: "Pipeline Syntax", Icon: HelpIcon },
];

const WINDOWS = [
  ["java-devop…", FirefoxIcon],
  ["java-devop…", FolderIcon],
  ["trabajo-fin…", DocIcon],
  ["java-devop…", VscodeIcon],
  ["[api-stude…", FolderIcon],
  ["cesar@ces…", TerminalIcon],
  ["Jenkinsfile…", EditorIcon],
  ["build image", FolderIcon],
];

export default function App() {
  return (
    <Screen>
      <Global />
      <TitleBar>
        <FirefoxIcon />
        <WindowTitle>java-devops-tf-api-build [Jenkins] - Mozilla Firefox</WindowTitle>
        <WindowButtons>
          <IconButton aria-label="Minimizar"><Svg w={10}><path d="M0 5h10" stroke="#777" strokeWidth="2" /></Svg></IconButton>
          <IconButton aria-label="Maximizar"><Svg w={10}><path d="M0 5h10M5 0v10" stroke="#777" strokeWidth="2" /></Svg></IconButton>
          <IconButton aria-label="Cerrar"><Svg w={10}><path d="M1 1l8 8M9 1L1 9" stroke="#777" strokeWidth="2.400" /></Svg></IconButton>
        </WindowButtons>
      </TitleBar>

      <TabStrip>
        {TABS.map(({ label, Icon, active, divider }) => (
          <Tab key={label} $active={active} $divider={divider}>
            <Icon />
            <TabLabel>{label}</TabLabel>
            <IconButton aria-label="Cerrar pestaña"><CloseX /></IconButton>
          </Tab>
        ))}
        <NewTab aria-label="Nueva pestaña">
          <Svg w={14}><path d="M7 0v14M0 7h14" stroke="#5a5a5a" strokeWidth="1.800" /></Svg>
        </NewTab>
      </TabStrip>

      <NavBar>
        <BackButton aria-label="Atrás"><BackIcon /></BackButton>
        <NavButtons>
          <IconButton aria-label="Adelante"><ForwardIcon /></IconButton>
          <IconButton aria-label="Recargar"><ReloadIcon /></IconButton>
          <IconButton aria-label="Inicio"><HomeIcon /></IconButton>
        </NavButtons>
        <UrlField as="div">
          <ShieldIcon />
          <UrlDivider />
          <InfoIcon />
          <UrlText><b>localhost</b>:8080/job/java-devops-tf-api-build/</UrlText>
          <IconButton aria-label="Acciones"><DotsIcon /></IconButton>
          <IconButton aria-label="Pocket"><PocketIcon /></IconButton>
          <IconButton aria-label="Marcador"><StarIcon /></IconButton>
        </UrlField>
        <SearchField>
          <SearchAddIcon />
          <BareInput type="search" placeholder="Buscar" aria-label="Buscar" />
        </SearchField>
        <Extensions>
          <IconButton aria-label="Biblioteca"><LibraryIcon /></IconButton>
          <IconButton aria-label="Barra lateral"><SidebarIcon /></IconButton>
          <IconButton aria-label="Cuenta"><AccountIcon /></IconButton>
          <PassButton aria-label="Contraseñas">
            <Svg><path d="M2 8h2.400M5.700 8h2.400M9.400 8h2.400" stroke="#fff" strokeWidth="2.400" /><path d="M14 5.500v5" stroke="#fff" /></Svg>
            <span>1</span>
          </PassButton>
          <IconButton aria-label="Extensión"><BracesIcon /></IconButton>
          <MenuButton aria-label="Menú"><MenuIcon /></MenuButton>
        </Extensions>
      </NavBar>

      <Viewport>
        <Page>
          <PageHeader>
            <Brand href="#">
              <JenkinsHead w={32} h={36} />
              Jenkins
            </Brand>
            <SiteSearch>
              <SiteSearchBox>
                <SearchGlass />
                <BareInput placeholder="búsqueda" aria-label="búsqueda" />
              </SiteSearchBox>
              <HelpIcon size={16} />
            </SiteSearch>
            <Account>
              <a href="#">admin</a>
              <span><i>| </i><a href="#">Desconectar</a></span>
            </Account>
          </PageHeader>
          <Breadcrumbs>
            <Crumb href="#">Jenkins</Crumb>
            <CrumbArrow />
            <Crumb href="#">java-devops-tf-api-build</Crumb>
            <CrumbArrow />
            <RefreshSlot><Link href="#">ACTIVAR AUTO REFRESCO</Link></RefreshSlot>
          </Breadcrumbs>

          <Body>
            <Side>
              <TaskList>
                {TASKS.map(({ label, Icon, ...t }) => (
                  <Task key={label}>
                    <Icon />
                    <TaskLink href="#" $visited={t.visited} $current={t.current} $focused={t.focused}>{label}</TaskLink>
                  </Task>
                ))}
              </TaskList>
              <Card>
                <CardHead>
                  <SunIcon />
                  <h2>Historia de tareas</h2>
                  <Link href="#">Tendencia</Link>
                  <Collapse aria-label="Contraer" />
                </CardHead>
                <FindBox>
                  <BareInput placeholder="find" aria-label="find" />
                  <span>x</span>
                </FindBox>
                <Builds>
                  <tbody>
                    <tr>
                      <td width="86"><BuildName><BallIcon /><Link href="#">#1</Link></BuildName></td>
                      <td>
                        <BuildDate>22-mar-2020 11:14</BuildDate>
                        <Progress />
                      </td>
                      <td><Cancel aria-label="Cancelar"><StopIcon /></Cancel></td>
                    </tr>
                  </tbody>
                </Builds>
                <CardFoot>
                  <RssIcon /><Link href="#">Atom feed Para Todos</Link>{" "}
                  <RssIcon /><Link href="#">Atom feed para los errores</Link>
                </CardFoot>
              </Card>
            </Side>

            <Main>
              <h1>Pipeline java-devops-tf-api-build</h1>
              <Actions>
                <WithIcon>
                  <NoteEdit />
                  <Link href="#">añadir descripción</Link>
                </WithIcon>
                <PrimaryButton>Desactivar el Proyecto</PrimaryButton>
              </Actions>
              <Recent>
                <Notepad />
                <Link href="#">Recent Changes</Link>
              </Recent>
              <h2>Stage View</h2>
              <Notice>No data available. This Pipeline has not yet run.</Notice>
              <h2>Enlaces permanentes</h2>
            </Main>
          </Body>

          <PageFooter>
            <span>Página generada: 22-mar-2020 11:13:42 PET</span>
            <Link href="#">REST API</Link>
            <Link href="#" $visited>Jenkins ver. 2.204.5</Link>
          </PageFooter>
        </Page>
        <Scrollbar />
      </Viewport>

      <Panel>
        <StartButton aria-label="Menú de aplicaciones"><LubuntuIcon /></StartButton>
        <Launchers>
          <IconButton aria-label="Archivos"><FilesIcon /></IconButton>
          <IconButton aria-label="Navegador"><GlobeIcon /></IconButton>
        </Launchers>
        <Windows>
          {WINDOWS.map(([label, Icon], i) => (
            <WindowItem key={i}><WindowIcon><Icon /></WindowIcon>{label}</WindowItem>
          ))}
        </Windows>
        <Pager>
          <Desk $current aria-label="Escritorio 1"><FirefoxIcon size={16} /></Desk>
          <Desk aria-label="Escritorio 2" />
        </Pager>
        <Tray>
          <Layout>ES</Layout>
          <VolumeIcon />
          <BatteryIcon />
          <Signal><SignalIcon /></Signal>
          <span>11:14</span>
          <Cpu>64</Cpu>
          <DesktopIcon />
        </Tray>
      </Panel>
    </Screen>
  );
}
